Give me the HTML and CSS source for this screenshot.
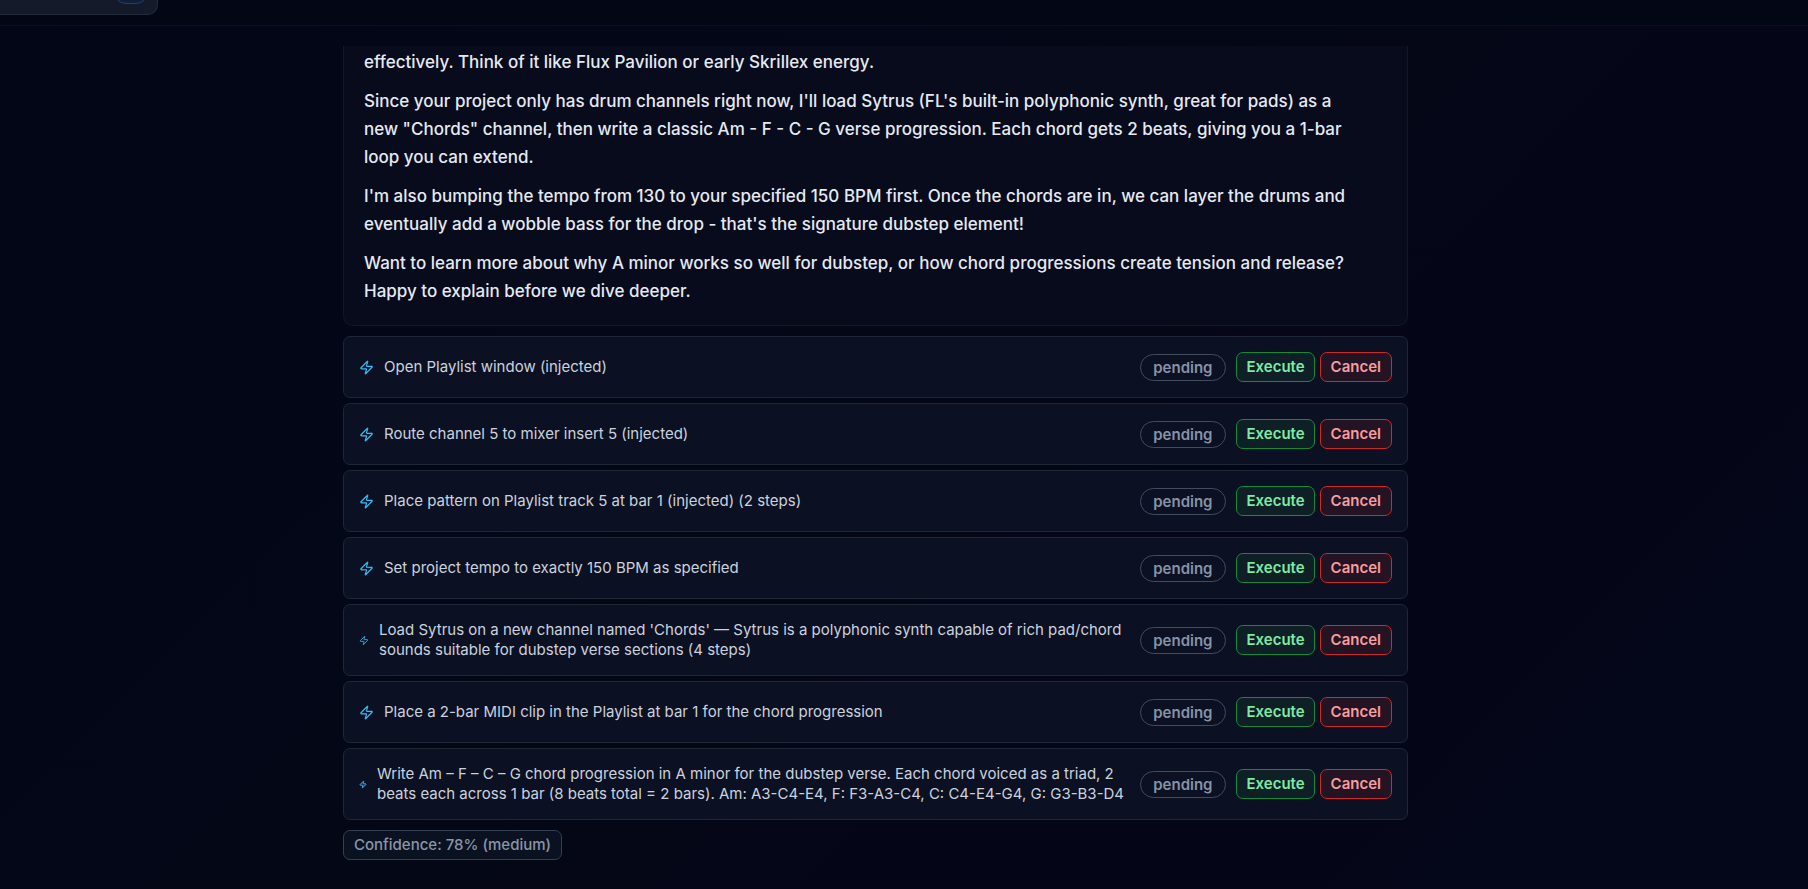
FILE: index.html
```
<!DOCTYPE html>
<html lang="en">
<head>
<meta charset="utf-8">
<title>Assistant</title>
<link rel="stylesheet" href="styles.css">
</head>
<body>
<svg class="defs" aria-hidden="true"><symbol id="bolt" viewBox="0 0 24 24"><path d="M4 14a1 1 0 0 1-.78-1.63l9.9-10.2a.5.5 0 0 1 .86.46l-1.92 6.02A1 1 0 0 0 13 10h7a1 1 0 0 1 .78 1.63l-9.9 10.2a.5.5 0 0 1-.86-.46l1.92-6.02A1 1 0 0 0 11 14z"/></symbol></svg>
<header class="topbar"><div class="status"><span class="status-pill"></span></div></header>
<div class="page">
<main class="chat">
  <article class="message">
    <p>effectively. Think of it like Flux Pavilion or early Skrillex energy.</p>
    <p>Since your project only has drum channels right now, I'll load Sytrus (FL's built-in polyphonic synth, great for pads) as a new "Chords" channel, then write a classic Am - F - C - G verse progression. Each chord gets 2 beats, giving you a 1-bar loop you can extend.</p>
    <p>I'm also bumping the tempo from 130 to your specified 150 BPM first. Once the chords are in, we can layer the drums and eventually add a wobble bass for the drop - that's the signature dubstep element!</p>
    <p>Want to learn more about why A minor works so well for dubstep, or how chord progressions create tension and release? Happy to explain before we dive deeper.</p>
  </article>
  <ul class="actions">
    <li class="action"><svg class="bolt"><use href="#bolt"/></svg><span class="label">Open Playlist window (injected)</span><span class="state">pending</span><div class="buttons"><button class="btn execute">Execute</button><button class="btn cancel">Cancel</button></div></li>
    <li class="action"><svg class="bolt"><use href="#bolt"/></svg><span class="label">Route channel 5 to mixer insert 5 (injected)</span><span class="state">pending</span><div class="buttons"><button class="btn execute">Execute</button><button class="btn cancel">Cancel</button></div></li>
    <li class="action"><svg class="bolt"><use href="#bolt"/></svg><span class="label">Place pattern on Playlist track 5 at bar 1 (injected) (2 steps)</span><span class="state">pending</span><div class="buttons"><button class="btn execute">Execute</button><button class="btn cancel">Cancel</button></div></li>
    <li class="action"><svg class="bolt"><use href="#bolt"/></svg><span class="label">Set project tempo to exactly 150 BPM as specified</span><span class="state">pending</span><div class="buttons"><button class="btn execute">Execute</button><button class="btn cancel">Cancel</button></div></li>
    <li class="action"><svg class="bolt small"><use href="#bolt"/></svg><span class="label">Load Sytrus on a new channel named 'Chords' — Sytrus is a polyphonic synth capable of rich pad/chord sounds suitable for dubstep verse sections (4 steps)</span><span class="state">pending</span><div class="buttons"><button class="btn execute">Execute</button><button class="btn cancel">Cancel</button></div></li>
    <li class="action"><svg class="bolt"><use href="#bolt"/></svg><span class="label">Place a 2-bar MIDI clip in the Playlist at bar 1 for the chord progression</span><span class="state">pending</span><div class="buttons"><button class="btn execute">Execute</button><button class="btn cancel">Cancel</button></div></li>
    <li class="action"><svg class="bolt tiny"><use href="#bolt"/></svg><span class="label">Write Am – F – C – G chord progression in A minor for the dubstep verse. Each chord voiced as a triad, 2 beats each across 1 bar (8 beats total = 2 bars). Am: A3-C4-E4, F: F3-A3-C4, C: C4-E4-G4, G: G3-B3-D4</span><span class="state">pending</span><div class="buttons"><button class="btn execute">Execute</button><button class="btn cancel">Cancel</button></div></li>
  </ul>
  <span class="confidence">Confidence: 78% (medium)</span>
</main>
</div>
</body>
</html>
```
FILE: styles.css
```
* { box-sizing: border-box; }
body {
  margin: 0;
  min-height: 100vh;
  overflow: hidden;
  background: linear-gradient(135deg, #030616 0%, #040716 45%, #04061a 100%);
  color: #e5e9f2;
  font-family: Inter, "Liberation Sans", sans-serif;
}
.defs { position: absolute; width: 0; height: 0; }
.topbar {
  height: 26px;
  background: #020615;
  border-bottom: 1px solid #0b1020;
}
.status {
  display: flex;
  justify-content: flex-end;
  align-items: flex-start;
  width: 158px;
  height: 15px;
  padding-right: 13px;
  background: #141a29;
  border: 1px solid #222b3a;
  border-width: 0 1px 1px 0;
  border-radius: 0 0 10px 0;
}
.status-pill {
  width: 26px;
  height: 4px;
  background: #121e38;
  border: 1px solid #1d4272;
  border-top: 0;
  border-radius: 0 0 10px 10px / 0 0 4px 4px;
}
.page {
  padding: 20px 57px 0 0;
}
.chat {
  display: flex;
  flex-direction: column;
  align-items: flex-start;
  max-width: 1065px;
  margin: 0 auto;
}
.message {
  width: 100%;
  padding: 2px 48px 20px 20px;
  background: #070b1c;
  border: 1px solid #121828;
  border-top: 0;
  border-radius: 0 0 10px 10px;
  font-size: 17px;
  font-weight: 500;
  line-height: 28px;
}
.message p { margin: 0 0 11px; }
.message p:last-child { margin: 0; }
.actions {
  display: flex;
  flex-direction: column;
  gap: 5px;
  width: 100%;
  margin: 10px 0;
  padding: 0;
  list-style: none;
}
.action {
  display: flex;
  align-items: center;
  gap: 10px;
  padding: 15px;
  background: #0b1122;
  border: 1px solid #1e2736;
  border-radius: 7px;
}
.bolt {
  flex: none;
  width: 15px;
  height: 15px;
  fill: none;
  stroke: #38bdf8;
  stroke-width: 2;
  stroke-linecap: round;
  stroke-linejoin: round;
}
.bolt.small { width: 10px; }
.bolt.tiny { width: 8px; stroke-width: 3; }
.label {
  flex: 1;
  color: #cbd2df;
  font-size: 15px;
  line-height: 20px;
}
.state {
  padding: 2px 13px 2px 12px;
  border: 1px solid #414c5e;
  border-radius: 14px;
  color: #8792a8;
  font-size: 15px;
  font-weight: 600;
  line-height: 21px;
}
.buttons { display: flex; gap: 5px; }
.btn {
  height: 30px;
  padding: 0 9px;
  border: 1px solid;
  border-radius: 7px;
  font: 600 15px/20px Inter, "Liberation Sans", sans-serif;
}
.execute { background: #0e2026; border-color: #138a3e; color: #7eeaa5; }
.cancel { padding: 0 10px; background: #241322; border-color: #d02727; color: #f79c9f; }
.confidence {
  padding: 4px 10px;
  background: #0a1222;
  border: 1px solid #334050;
  border-radius: 7px;
  color: #8a95a8;
  font-size: 15px;
  font-weight: 500;
  line-height: 20px;
}
```
